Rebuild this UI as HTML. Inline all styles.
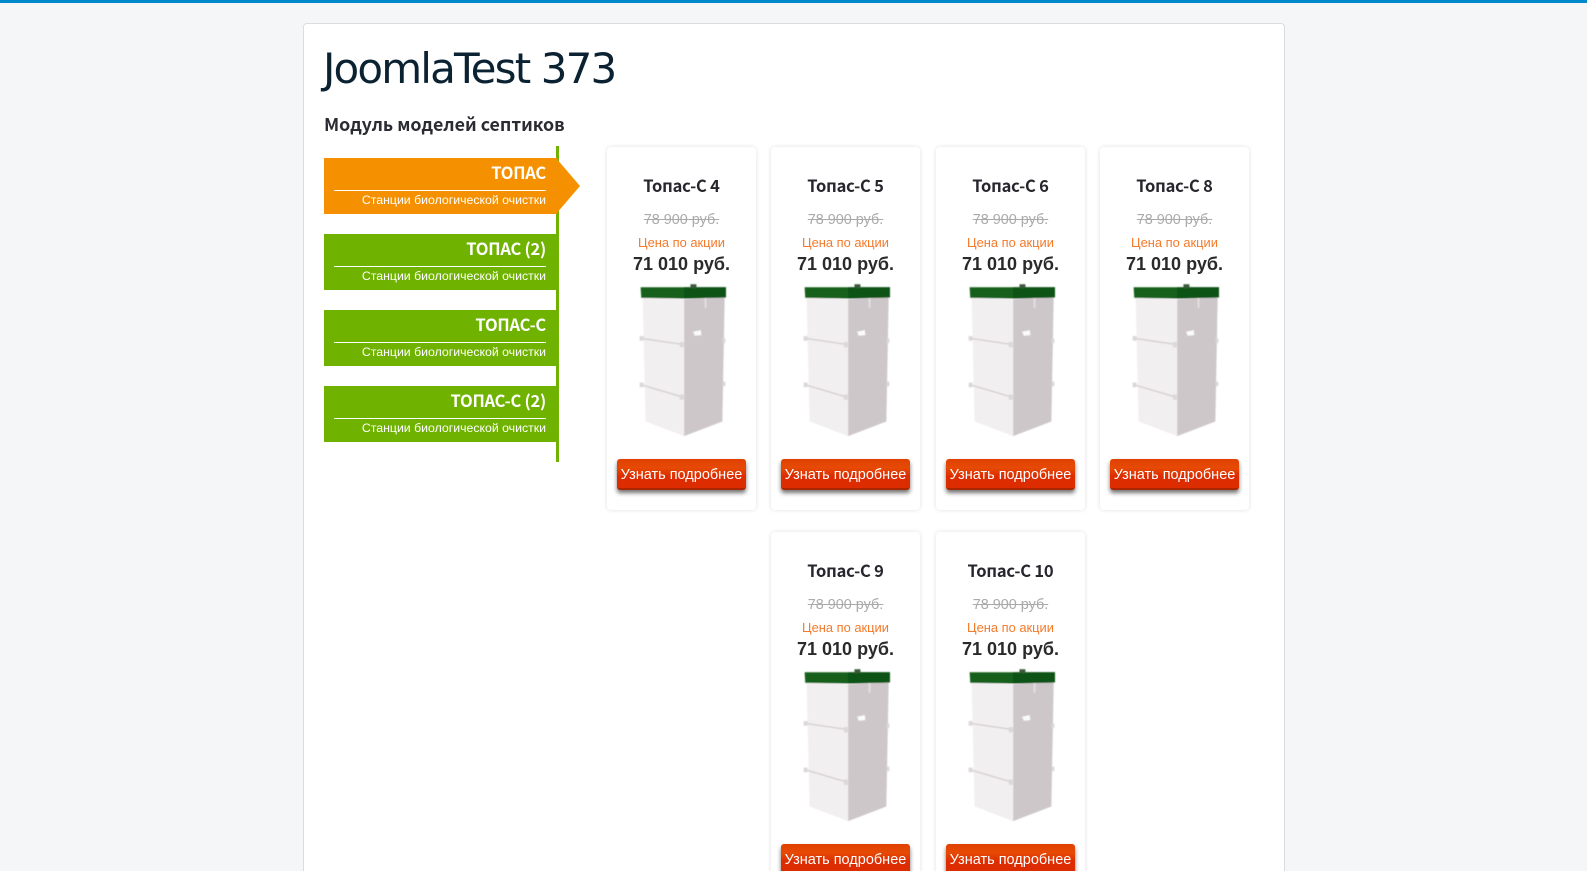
<!DOCTYPE html>
<html lang="ru"><head><meta charset="utf-8"><title>JoomlaTest 373</title>
<style>
html,body{margin:0;padding:0;width:1587px;height:871px;overflow:hidden;background:#f4f6f7;font-family:"Liberation Sans",sans-serif}
#page{position:relative;width:1587px;height:871px;overflow:hidden}
.abs,.c,.m{position:absolute}
#bar{left:0;top:0;width:1587px;height:3px;background:#0088cc}
#wrap{left:303px;top:23px;width:980px;height:860px;background:#fff;border:1px solid #dcdcdc;border-radius:4px}
#t{left:323px;top:41px;font:42px/56px "DejaVu Sans",sans-serif;letter-spacing:-1.85px;color:#0b2233;white-space:nowrap}
#h{left:324px;top:111px;font:600 17.8px/26px "Noto Sans CJK SC",sans-serif;color:#2b2b33;white-space:nowrap}
#line{left:556px;top:146px;width:3px;height:316px;background:#6fb300}
.m{left:324px;width:233px;height:56px;background:#6fb300;color:#fff;text-align:right}
.m b{position:absolute;right:11px;top:2px;font:600 16.5px/24px "Noto Sans CJK SC",sans-serif;letter-spacing:-.25px;white-space:nowrap}
.m i{position:absolute;left:10px;right:11px;top:32px;height:1px;background:#fff}
.m span{position:absolute;right:11px;top:34px;font:12.3px/16px "Liberation Sans",sans-serif;white-space:nowrap}
.c{width:149px;height:363px;background:#fff;border-radius:4px;box-shadow:0 0 5px rgba(0,0,0,.12);text-align:center;color:#2a2a2a}
.c div{position:absolute;left:0;width:149px;white-space:nowrap}
.n{top:26px;font:600 16.5px/24px "Noto Sans CJK SC",sans-serif;letter-spacing:-.2px;color:#26262c}
.o{top:65px;font:14.4px/16px "Liberation Sans",sans-serif;color:#aaa;text-decoration:line-through}
.p{top:88px;font:12.9px/16px "Liberation Sans",sans-serif;color:#f47a2a}
.s{top:106px;font:bold 18px/22px "Liberation Sans",sans-serif;color:#2a2a2a}
.c svg{position:absolute;left:18px;top:128px}
.c .b{left:10px;top:312px;width:129px;height:29px;border-radius:3px;background:linear-gradient(#e03f00,#e64a05 30%,#dd2c00 60%);border-bottom:2px solid #a82600;box-shadow:0 3px 4px rgba(0,0,0,.55);color:#fff;font:14.5px/32px "Liberation Sans",sans-serif}
</style></head><body>
<div id="page">
<div class="abs" id="bar"></div>
<div class="abs" id="wrap"></div>
<div class="abs" id="t">JoomlaTest 373</div>
<div class="abs" id="h">Модуль моделей септиков</div>
<div class="abs" id="line"></div>
<svg class="abs" style="left:556px;top:158px" width="25" height="56"><polygon points="0,0 24,28 0,56" fill="#f59100"/></svg>
<div class="m" style="top:158px;background:#f59100"><b>ТОПАС</b><i></i><span>Станции биологической очистки</span></div>
<div class="m" style="top:234px"><b>ТОПАС (2)</b><i></i><span>Станции биологической очистки</span></div>
<div class="m" style="top:310px"><b>ТОПАС-С</b><i></i><span>Станции биологической очистки</span></div>
<div class="m" style="top:386px"><b>ТОПАС-С (2)</b><i></i><span>Станции биологической очистки</span></div>

<svg width="0" height="0" style="position:absolute"><defs>
<filter id="bl" x="-5%" y="-5%" width="110%" height="110%"><feGaussianBlur stdDeviation="1.8"/></filter>
<symbol id="tank" viewBox="0 0 310 495">
<g filter="url(#bl)">
<polygon points="53,66 178,72 178,484 62,440" fill="#f2eff0"/>
<polygon points="178,72 300,66 293,440 178,484" fill="#cdc7ca"/>
<polygon points="47,36 304,36 304,67 178,70 49,68" fill="#15601a"/>
<polygon points="178,36 304,36 304,67 178,70" fill="#115218"/>
<rect x="197" y="27" width="18" height="12" fill="#3a5a3a"/>
<rect x="240" y="70" width="5" height="28" fill="#e6e2e4"/>
<polygon points="205,170 228,165 230,180 210,182" fill="#fbfbfb"/>
<polyline points="50,190 172,208" stroke="#d2cdd0" stroke-width="4" fill="none"/>
<polyline points="50,330 172,366" stroke="#d2cdd0" stroke-width="4" fill="none"/>
<rect x="44" y="183" width="12" height="14" fill="#dcd8da"/><rect x="44" y="323" width="12" height="14" fill="#dcd8da"/>
<rect x="165" y="201" width="12" height="16" fill="#dcd8da"/><rect x="165" y="359" width="12" height="16" fill="#dcd8da"/>
<rect x="294" y="190" width="8" height="14" fill="#dcd8da"/><rect x="294" y="320" width="8" height="14" fill="#dcd8da"/>
</g></symbol></defs></svg>

<div class="c" style="left:607px;top:147px"><div class="n">Топас-С 4</div><div class="o">78 900 руб.</div><div class="p">Цена по акции</div><div class="s">71 010 руб.</div><svg width="103" height="165"><use href="#tank"/></svg><div class="b">Узнать подробнее</div></div>
<div class="c" style="left:771px;top:147px"><div class="n">Топас-С 5</div><div class="o">78 900 руб.</div><div class="p">Цена по акции</div><div class="s">71 010 руб.</div><svg width="103" height="165"><use href="#tank"/></svg><div class="b">Узнать подробнее</div></div>
<div class="c" style="left:936px;top:147px"><div class="n">Топас-С 6</div><div class="o">78 900 руб.</div><div class="p">Цена по акции</div><div class="s">71 010 руб.</div><svg width="103" height="165"><use href="#tank"/></svg><div class="b">Узнать подробнее</div></div>
<div class="c" style="left:1100px;top:147px"><div class="n">Топас-С 8</div><div class="o">78 900 руб.</div><div class="p">Цена по акции</div><div class="s">71 010 руб.</div><svg width="103" height="165"><use href="#tank"/></svg><div class="b">Узнать подробнее</div></div>
<div class="c" style="left:771px;top:532px"><div class="n">Топас-С 9</div><div class="o">78 900 руб.</div><div class="p">Цена по акции</div><div class="s">71 010 руб.</div><svg width="103" height="165"><use href="#tank"/></svg><div class="b">Узнать подробнее</div></div>
<div class="c" style="left:936px;top:532px"><div class="n">Топас-С 10</div><div class="o">78 900 руб.</div><div class="p">Цена по акции</div><div class="s">71 010 руб.</div><svg width="103" height="165"><use href="#tank"/></svg><div class="b">Узнать подробнее</div></div>
</div>
</body></html>
